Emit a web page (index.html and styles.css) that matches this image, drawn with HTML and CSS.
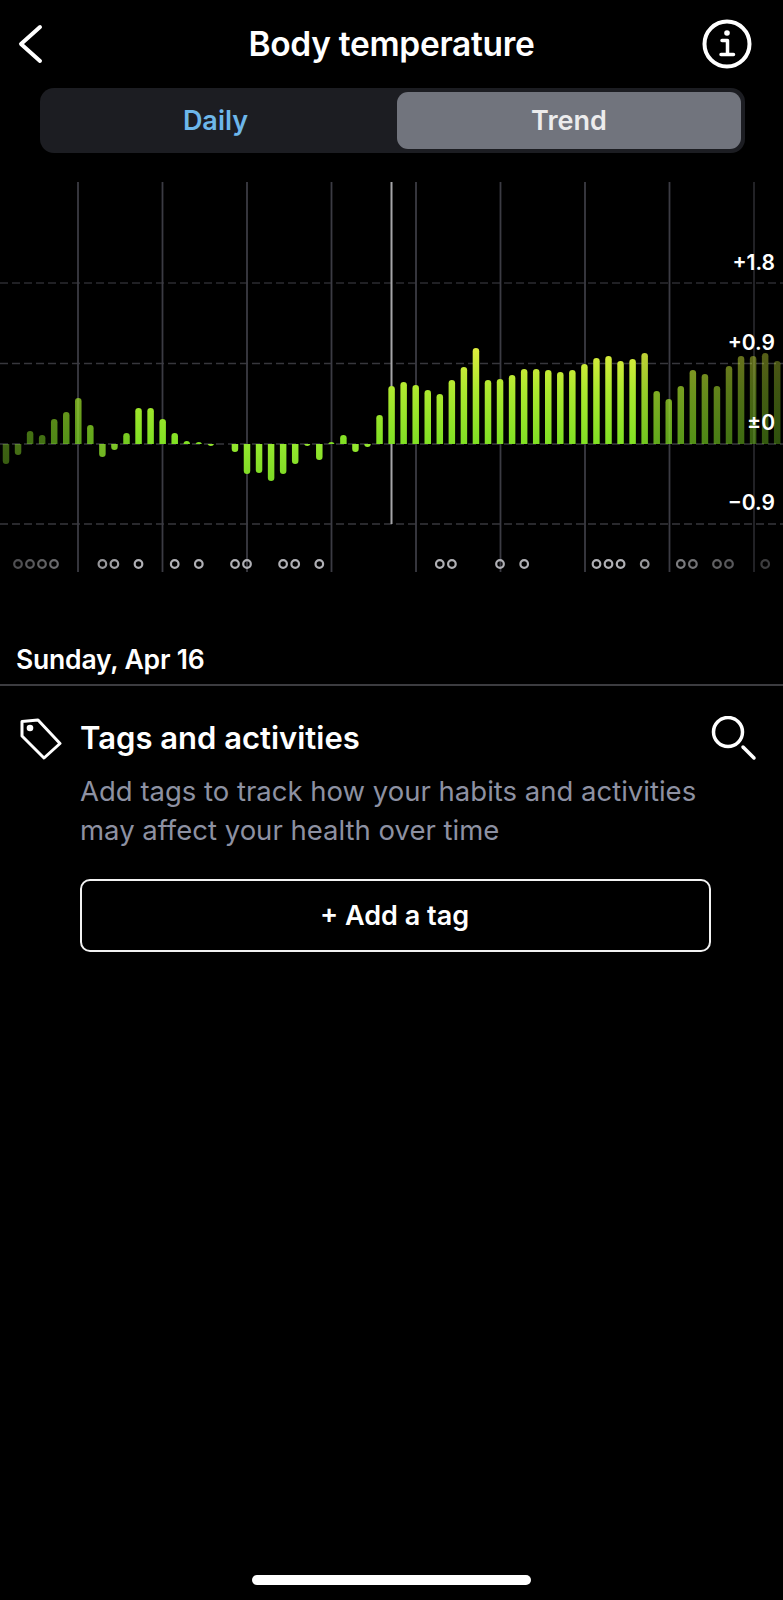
FILE: index.html
```html
<!DOCTYPE html>
<html lang="en">
<head>
    <meta charset="UTF-8">
    <meta name="viewport" content="width=device-width, initial-scale=1.0">
    <title>Body temperature</title>
    <link rel="stylesheet" href="styles.css">
</head>
<body>
    <div class="page">
        <!-- Header -->
        <header class="top-bar">
            <svg class="back-icon" viewBox="0 0 26 40" width="26" height="40">
                <polyline points="23,3 4,20 23,37"></polyline>
            </svg>
            <h1>Body temperature</h1>
            <svg class="info-icon" viewBox="0 0 50 50" width="50" height="50">
                <circle cx="25" cy="25" r="22.5"></circle>
                <circle class="info-dot" cx="25" cy="14" r="2.8"></circle>
                <path d="M20 21.5h5.5v14M19 35.5h12.5"></path>
            </svg>
        </header>

        <div class="tabs">
            <div class="tab tab-daily">Daily</div>
            <div class="tab tab-active">Trend</div>
        </div>

        <!-- Chart -->
        <svg class="chart" viewBox="0 175 783 410" width="783" height="410">
            <defs>
                <linearGradient id="upGrad" gradientUnits="userSpaceOnUse" x1="0" y1="444" x2="0" y2="347">
                    <stop offset="0" stop-color="#80e024"></stop>
                    <stop offset="0.55" stop-color="#ace82e"></stop>
                    <stop offset="1" stop-color="#dfec3e"></stop>
                </linearGradient>
                <linearGradient id="downGrad" gradientUnits="userSpaceOnUse" x1="0" y1="444" x2="0" y2="482">
                    <stop offset="0" stop-color="#94e82e"></stop>
                    <stop offset="1" stop-color="#7cd824"></stop>
                </linearGradient>
                <clipPath id="aboveZero"><rect x="0" y="175" width="783" height="269"></rect></clipPath>
                <clipPath id="belowZero"><rect x="0" y="444" width="783" height="60"></rect></clipPath>
            </defs>

            <g class="dashes">
                <line class="dash-faint" x1="0" y1="283" x2="783" y2="283"></line>
                <line x1="0" y1="363.5" x2="783" y2="363.5"></line>
                <line x1="0" y1="444" x2="783" y2="444"></line>
                <line x1="0" y1="524" x2="783" y2="524"></line>
            </g>

            <g class="day-lines">
                <line x1="78" y1="182" x2="78" y2="572"></line>
                <line x1="162.5" y1="182" x2="162.5" y2="572"></line>
                <line x1="247" y1="182" x2="247" y2="572"></line>
                <line x1="331.5" y1="182" x2="331.5" y2="572"></line>
                <line x1="416" y1="182" x2="416" y2="572"></line>
                <line x1="500.5" y1="182" x2="500.5" y2="572"></line>
                <line x1="585" y1="182" x2="585" y2="572"></line>
                <line x1="669.5" y1="182" x2="669.5" y2="572"></line>
                <line class="day-line-end" x1="754" y1="182" x2="754" y2="572"></line>
            </g>
            <line class="cursor" x1="391.5" y1="182" x2="391.5" y2="524"></line>

            <!-- bars above zero -->
            <g class="bars-up" clip-path="url(#aboveZero)">
                <rect x="26.850" y="431" height="17" opacity=".5"></rect>
                <rect x="38.9" y="435" height="13" opacity=".5"></rect>
                <rect x="50.95" y="419" height="29" opacity=".6"></rect>
                <rect x="63" y="412" height="36" opacity=".65"></rect>
                <rect x="75.05" y="398" height="50" opacity=".7"></rect>
                <rect x="87.1" y="425" height="23" opacity=".75"></rect>
                <rect x="123.25" y="433" height="15" opacity=".9"></rect>
                <rect x="135.3" y="408" height="40"></rect>
                <rect x="147.35" y="408" height="40"></rect>
                <rect x="159.4" y="419" height="29"></rect>
                <rect x="171.45" y="433" height="15"></rect>
                <rect x="183.5" y="441" height="7"></rect>
                <rect x="195.55" y="442" height="6"></rect>
                <rect x="328.1" y="442" height="6"></rect>
                <rect x="340.15" y="435" height="13"></rect>
                <rect x="376.3" y="415" height="33"></rect>
                <rect x="388.35" y="386" height="62"></rect>
                <rect x="400.4" y="382" height="66"></rect>
                <rect x="412.45" y="385" height="63"></rect>
                <rect x="424.5" y="390" height="58"></rect>
                <rect x="436.55" y="394" height="54"></rect>
                <rect x="448.6" y="380" height="68"></rect>
                <rect x="460.65" y="367" height="81"></rect>
                <rect x="472.7" y="348" height="100"></rect>
                <rect x="484.75" y="380" height="68"></rect>
                <rect x="496.8" y="379" height="69"></rect>
                <rect x="508.85" y="375" height="73"></rect>
                <rect x="520.9" y="369" height="79"></rect>
                <rect x="532.95" y="369" height="79"></rect>
                <rect x="545" y="370" height="78"></rect>
                <rect x="557.05" y="372" height="76"></rect>
                <rect x="569.1" y="370" height="78"></rect>
                <rect x="581.15" y="364" height="84"></rect>
                <rect x="593.2" y="358" height="90"></rect>
                <rect x="605.25" y="356" height="92"></rect>
                <rect x="617.3" y="361" height="87"></rect>
                <rect x="629.35" y="359" height="89"></rect>
                <rect x="641.4" y="353" height="95" opacity=".88"></rect>
                <rect x="653.45" y="391" height="57" opacity=".75"></rect>
                <rect x="665.5" y="399" height="49" opacity=".72"></rect>
                <rect x="677.55" y="386" height="62" opacity=".68"></rect>
                <rect x="689.6" y="370" height="78" opacity=".64"></rect>
                <rect x="701.65" y="374" height="74" opacity=".6"></rect>
                <rect x="713.7" y="386" height="62" opacity=".56"></rect>
                <rect x="725.75" y="366" height="82" opacity=".52"></rect>
                <rect x="737.8" y="356" height="92" opacity=".48"></rect>
                <rect x="749.85" y="356" height="92" opacity=".44"></rect>
                <rect x="761.9" y="353" height="95" opacity=".4"></rect>
                <rect x="773.95" y="361" height="87" opacity=".36"></rect>
            </g>

            <!-- bars below zero -->
            <g class="bars-down" clip-path="url(#belowZero)">
                <rect x="2.75" y="440" height="24" opacity=".42"></rect>
                <rect x="14.8" y="440" height="15" opacity=".48"></rect>
                <rect x="99.15" y="440" height="17" opacity=".8"></rect>
                <rect x="111.2" y="440" height="10" opacity=".85"></rect>
                <rect x="207.6" y="440" height="6"></rect>
                <rect x="231.7" y="440" height="12"></rect>
                <rect x="243.75" y="440" height="34"></rect>
                <rect x="255.8" y="440" height="33"></rect>
                <rect x="267.85" y="440" height="41"></rect>
                <rect x="279.9" y="440" height="34"></rect>
                <rect x="291.95" y="440" height="24"></rect>
                <rect x="304" y="440" height="6"></rect>
                <rect x="316.05" y="440" height="20"></rect>
                <rect x="352.2" y="440" height="12"></rect>
                <rect x="364.25" y="440" height="7"></rect>
            </g>

            <!-- tag markers -->
            <g class="markers">
                <circle cx="18" cy="564" r="3.8" opacity=".45"></circle>
                <circle cx="30" cy="564" r="3.8" opacity=".5"></circle>
                <circle cx="42" cy="564" r="3.8" opacity=".55"></circle>
                <circle cx="54" cy="564" r="3.8" opacity=".6"></circle>
                <circle cx="102.4" cy="564" r="3.8" opacity=".85"></circle>
                <circle cx="114.4" cy="564" r="3.8" opacity=".9"></circle>
                <circle cx="138.5" cy="564" r="3.8"></circle>
                <circle cx="174.7" cy="564" r="3.8"></circle>
                <circle cx="198.8" cy="564" r="3.8"></circle>
                <circle cx="235" cy="564" r="3.8"></circle>
                <circle cx="247" cy="564" r="3.8"></circle>
                <circle cx="283.1" cy="564" r="3.8"></circle>
                <circle cx="295.2" cy="564" r="3.8"></circle>
                <circle cx="319.3" cy="564" r="3.8"></circle>
                <circle cx="439.8" cy="564" r="3.8"></circle>
                <circle cx="451.9" cy="564" r="3.8"></circle>
                <circle cx="500" cy="564" r="3.8"></circle>
                <circle cx="524.2" cy="564" r="3.8"></circle>
                <circle cx="596.5" cy="564" r="3.8"></circle>
                <circle cx="608.5" cy="564" r="3.8"></circle>
                <circle cx="620.6" cy="564" r="3.8"></circle>
                <circle cx="644.7" cy="564" r="3.8" opacity=".85"></circle>
                <circle cx="680.8" cy="564" r="3.8" opacity=".7"></circle>
                <circle cx="692.9" cy="564" r="3.8" opacity=".65"></circle>
                <circle cx="717" cy="564" r="3.8" opacity=".55"></circle>
                <circle cx="729" cy="564" r="3.8" opacity=".5"></circle>
                <circle cx="765.2" cy="564" r="3.8" opacity=".35"></circle>
            </g>

            <g class="axis-labels">
                <text x="775" y="270">+1.8</text>
                <text x="775" y="350">+0.9</text>
                <text x="775" y="430">±0</text>
                <text x="775" y="510">−0.9</text>
            </g>
        </svg>

        <!-- Day details -->
        <div class="day-title">Sunday, Apr 16</div>

        <section class="tags">
            <svg class="tag-icon" viewBox="0 0 44 44" width="44" height="44">
                <path d="M4 5.5l16-1.5 22 23.500-16 14.500-22-22z"></path>
                <circle cx="12" cy="12" r="3.300"></circle>
            </svg>
            <div class="tags-body">
                <div class="tags-head">
                    <h2>Tags and activities</h2>
                    <svg class="search-icon" viewBox="0 0 46 46" width="46" height="46">
                        <circle cx="17" cy="16" r="14.500"></circle>
                        <line x1="32" y1="31" x2="43" y2="42"></line>
                    </svg>
                </div>
                <p>Add tags to track how your habits and activities may affect your health over time</p>
                <button class="add-tag">+ Add a tag</button>
            </div>
        </section>

        <div class="home-bar"></div>
    </div>
</body>
</html>
```

FILE: styles.css
```css
body {
    margin: 0;
    background: #000;
    color: #fff;
    font-family: Inter, "Noto Sans", sans-serif;
    overflow: hidden;
}

.page {
    display: flex;
    flex-direction: column;
    height: 1600px;
}

.top-bar {
    display: flex;
    justify-content: space-between;
    align-items: center;
    height: 50px;
    padding: 19px 31px 0 17px;
}

.top-bar h1 {
    margin: 0 0 0 38px;
    font-size: 33.500px;
    font-weight: 600;
    letter-spacing: -0.3px;
}

.back-icon polyline,
.info-icon circle,
.info-icon path {
    fill: none;
    stroke: #fff;
    stroke-width: 4;
    stroke-linecap: round;
    stroke-linejoin: round;
}

.info-icon path {
    stroke-width: 3.5;
}

.info-icon .info-dot {
    fill: #fff;
    stroke: none;
}

.tabs {
    display: grid;
    grid-template-columns: 1fr 344px;
    height: 57px;
    margin: 19px 38px 0 40px;
    padding: 4px;
    background: #1c1d22;
    border-radius: 14px;
}

.tab {
    display: flex;
    justify-content: center;
    align-items: center;
    font-size: 27px;
    font-weight: 600;
}

.tab-daily {
    padding-right: 10px;
    color: #6db7ea;
}

.tab-active {
    background: #71747d;
    border-radius: 11px;
    color: #ececed;
}

.chart {
    display: block;
    margin-top: 22px;
}

.dashes line {
    stroke: #37373c;
    stroke-width: 1.5;
    stroke-dasharray: 8 4;
}

.dashes .dash-faint {
    stroke: #2b2b30;
}

.day-lines line {
    stroke: #3b3b43;
    stroke-width: 1.8;
}

.day-lines .day-line-end {
    stroke: #26262b;
}

.cursor {
    stroke: #a5a5a8;
    stroke-width: 2;
}

.bars-up rect,
.bars-down rect {
    width: 6.5px;
    rx: 3.25px;
}

.bars-up rect {
    fill: url(#upGrad);
}

.bars-down rect {
    fill: url(#downGrad);
}

.markers circle {
    fill: none;
    stroke: #b0b0b5;
    stroke-width: 2.2;
}

.axis-labels text {
    fill: #fff;
    font-size: 21px;
    font-weight: 600;
    text-anchor: end;
}

.day-title {
    margin-top: 58px;
    padding: 0 16px 9px;
    border-bottom: 2px solid #3c3c40;
    font-size: 26.500px;
    font-weight: 600;
    letter-spacing: -0.2px;
}

.tags {
    display: flex;
    padding: 30px 26px 0 18px;
}

.tag-icon {
    flex: none;
    margin-right: 18px;
}

.tag-icon path {
    fill: none;
    stroke: #fff;
    stroke-width: 3;
    stroke-linejoin: round;
}

.tag-icon circle {
    fill: #fff;
}

.tags-body {
    flex: 1;
}

.tags-head {
    display: flex;
    justify-content: space-between;
    align-items: flex-start;
    height: 56px;
}

.tags-head h2 {
    margin: 0;
    font-size: 31px;
    font-weight: 600;
    line-height: 44px;
}

.search-icon circle,
.search-icon line {
    fill: none;
    stroke: #fff;
    stroke-width: 3.500;
    stroke-linecap: round;
}

.tags-body p {
    width: 660px;
    margin: 0;
    color: #8d91a2;
    font-size: 27.500px;
    line-height: 39px;
}

.add-tag {
    display: block;
    width: 631px;
    height: 73px;
    margin-top: 29px;
    padding: 0 2px 0 0;
    background: #000;
    border: 2px solid #f2f2f2;
    border-radius: 10px;
    color: #fff;
    font-family: inherit;
    font-size: 27px;
    font-weight: 600;
}

.home-bar {
    width: 279px;
    height: 10px;
    margin: auto auto 15px;
    background: #fff;
    border-radius: 5px;
}
```
